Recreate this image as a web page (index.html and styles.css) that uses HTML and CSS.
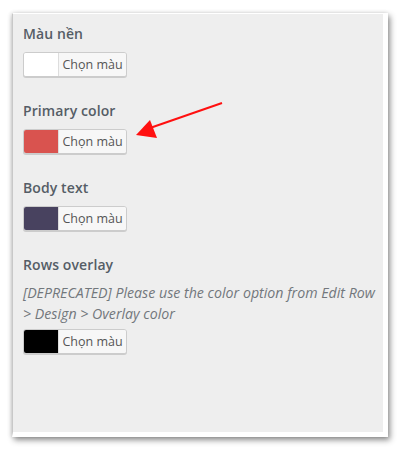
FILE: index.html
```html
<!DOCTYPE html>
<html lang="vi">
<head>
<meta charset="utf-8">
<title>Colors</title>
<link rel="stylesheet" href="styles.css">
</head>
<body>
<div class="card">
  <div class="control">
    <div class="title">Màu nền</div>
    <button class="color-btn"><span class="swatch" style="background:#ffffff"></span><span class="btn-text">Chọn màu</span></button>
  </div>
  <div class="control">
    <div class="title">Primary color</div>
    <button class="color-btn"><span class="swatch" style="background:#d9534f"></span><span class="btn-text">Chọn màu</span></button>
  </div>
  <div class="control">
    <div class="title">Body text</div>
    <button class="color-btn"><span class="swatch" style="background:#48425f"></span><span class="btn-text">Chọn màu</span></button>
  </div>
  <div class="control">
    <div class="title">Rows overlay</div>
    <div class="desc">[DEPRECATED] Please use the color option from Edit Row &gt; Design &gt; Overlay color</div>
    <button class="color-btn"><span class="swatch" style="background:#000000"></span><span class="btn-text">Chọn màu</span></button>
  </div>
</div>
<svg class="arrow" width="402" height="451" viewBox="0 0 402 451">
  <line x1="222" y1="103" x2="150" y2="128" stroke="#ff1010" stroke-width="2"/>
  <polygon points="136,135 150,120 157,138" fill="#ff1010"/>
</svg>
</body>
</html>
```

FILE: styles.css
```css
html, body {
  margin: 0;
  padding: 0;
  background: #ffffff;
}
body {
  width: 402px;
  height: 451px;
  padding: 13px 0 0 12px;
  box-sizing: border-box;
  font-family: "Open Sans", "Noto Sans", sans-serif;
  overflow: hidden;
}
.card {
  width: 376px;
  height: 424px;
  box-sizing: border-box;
  background: #eeeeee;
  border-top: 1px solid #ffffff;
  border-left: 1px solid #c8c8c8;
  border-right: 5px solid #ffffff;
  border-bottom: 5px solid #ffffff;
  box-shadow: 2px 3px 6px rgba(0, 0, 0, 0.45), -1px 0 4px rgba(0, 0, 0, 0.12);
  padding: 8px 0 0 10px;
}
.control {
  margin-bottom: 22px;
}
.title {
  font-size: 14px;
  line-height: 24px;
  font-weight: 600;
  color: #555d66;
  margin-bottom: 6px;
  letter-spacing: 0.1px;
}
.desc {
  font-size: 14.2px;
  font-style: italic;
  line-height: 21px;
  color: #72777c;
  margin-top: -1px;
  margin-bottom: 5px;
  padding-right: 2px;
}
.color-btn {
  display: flex;
  align-items: stretch;
  height: 25px;
  width: 104px;
  padding: 0;
  margin: 0;
  border: 1px solid #cccccc;
  border-radius: 3px;
  background: #f7f7f7;
  box-shadow: 0 1px 0 #cccccc;
  overflow: hidden;
  box-sizing: border-box;
  cursor: pointer;
}
.swatch {
  width: 34px;
  flex: none;
  border-right: 1px solid #dddddd;
}
.btn-text {
  flex: 1;
  font-family: "Open Sans", "Noto Sans", sans-serif;
  font-size: 12.5px;
  line-height: 23px;
  color: #555555;
  text-align: center;
  background: #f7f7f7;
}
.arrow {
  position: absolute;
  left: 0;
  top: 0;
  pointer-events: none;
}
```
